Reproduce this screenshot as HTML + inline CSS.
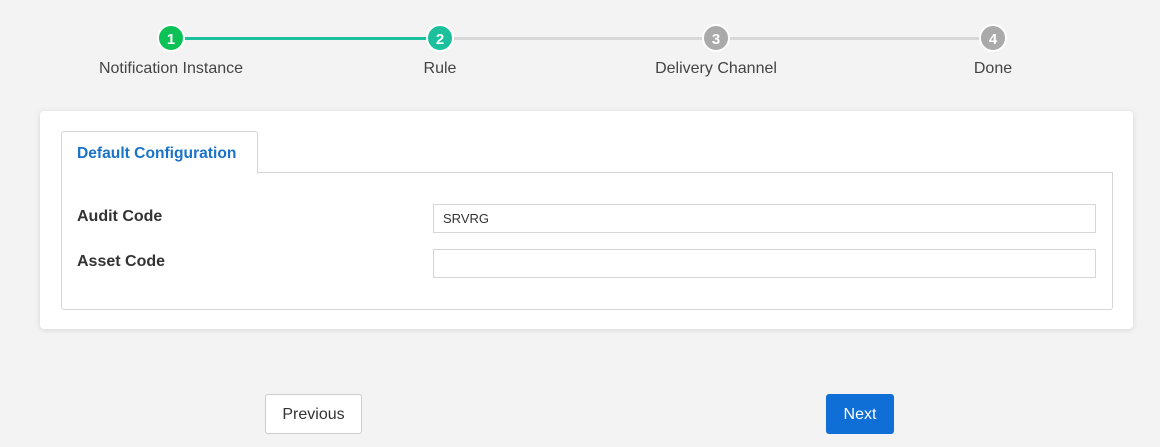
<!DOCTYPE html>
<html><head><style>
body{margin:0;width:1160px;height:447px;background:#f3f3f3;font-family:"Liberation Sans",sans-serif;position:relative;overflow:hidden}
.a{position:absolute}
.c{position:absolute;width:24px;height:24px;border-radius:50%;border:2px solid #fff;color:#fff;font-weight:bold;font-size:15px;text-align:center;line-height:27px;top:24px}
.l{position:absolute;font-size:16px;color:#444;top:60px;transform:translateX(-50%);white-space:nowrap}
.in{position:absolute;left:433px;border:1px solid #d6d6d6;background:#fff;font-size:13px;color:#333;line-height:27px;text-indent:9px;box-sizing:border-box;width:663px;height:29px}
.lab{position:absolute;left:77px;font-weight:bold;font-size:16px;color:#333}
</style></head><body>
<div class="a" style="left:172px;top:37px;width:269px;height:3px;background:#1cc09d"></div>
<div class="a" style="left:441px;top:37px;width:553px;height:3px;background:#d8d8d8"></div>
<div class="c" style="left:157px;background:#0cc257">1</div>
<div class="c" style="left:426px;background:#1cc09d">2</div>
<div class="c" style="left:702px;background:#aaa">3</div>
<div class="c" style="left:979px;background:#aaa">4</div>
<div class="l" style="left:171px">Notification Instance</div>
<div class="l" style="left:440px">Rule</div>
<div class="l" style="left:716px">Delivery Channel</div>
<div class="l" style="left:993px">Done</div>
<div class="a" style="left:40px;top:111px;width:1093px;height:218px;background:#fff;border-radius:4px;box-shadow:0 1px 6px rgba(0,0,0,.12)"></div>
<div class="a" style="left:61px;top:172px;width:1050px;height:136px;border:1px solid #d6d6d6;border-radius:0 0 3px 3px"></div>
<div class="a" style="left:61px;top:131px;width:195px;height:42px;border:1px solid #d6d6d6;border-bottom:none;border-radius:3px 3px 0 0;background:#fff;color:#1a73c8;font-size:15.6px;font-weight:bold;line-height:43px;text-indent:15px">Default Configuration</div>
<div class="lab" style="top:208px">Audit Code</div>
<div class="lab" style="top:253px">Asset Code</div>
<div class="in" style="top:204px;line-height:28px">SRVRG</div>
<div class="in" style="top:249px"></div>
<div class="a" style="left:265px;top:394px;width:95px;height:38px;border:1px solid #ccc;border-radius:3px;background:#fff;font-size:16px;color:#333;text-align:center;line-height:40px">Previous</div>
<div class="a" style="left:826px;top:394px;width:68px;height:40px;border-radius:3px;background:#0f6fd6;font-size:16px;color:#fff;text-align:center;line-height:41px">Next</div>
</body></html>
